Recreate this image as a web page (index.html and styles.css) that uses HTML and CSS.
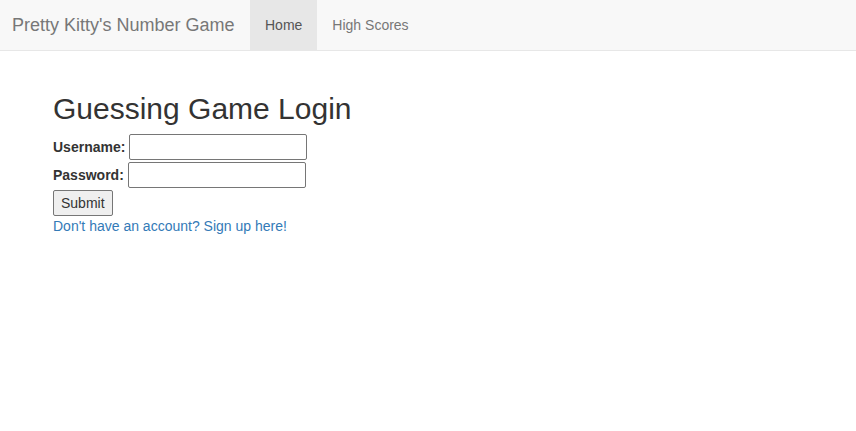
FILE: index.html
```html
<!DOCTYPE html>
<html>
<head>
<meta charset="utf-8">
<title>Pretty Kitty's Number Game</title>
<link rel="stylesheet" href="styles.css">
</head>
<body>
<nav class="navbar">
  <a class="brand" href="#">Pretty Kitty's Number Game</a>
  <ul class="nav">
    <li class="active"><a href="#">Home</a></li>
    <li><a href="#">High Scores</a></li>
  </ul>
</nav>
<main class="container">
  <h1>Guessing Game Login</h1>
  <form class="login">
    <div class="row"><label for="u">Username:</label> <input id="u" type="text"></div>
    <div class="row"><label for="p">Password:</label> <input id="p" type="password"></div>
    <div class="row"><button type="button">Submit</button></div>
  </form>
  <a class="signup" href="#">Don't have an account? Sign up here!</a>
</main>
</body>
</html>
```

FILE: styles.css
```css
* { box-sizing: border-box; }
html, body { margin: 0; }
body {
  font-family: "Liberation Sans", Arial, sans-serif;
  font-size: 14px;
  line-height: 1.42857;
  color: #333;
  background: #fff;
}
.navbar {
  display: flex;
  align-items: stretch;
  height: 51px;
  background: #f8f8f8;
  border-bottom: 1px solid #e7e7e7;
}
.brand {
  padding: 15px 15px 0 12px;
  font-size: 18px;
  line-height: 20px;
  color: #777;
  text-decoration: none;
  width: 250px;
}
.nav {
  display: flex;
  list-style: none;
  margin: 0;
  padding: 0;
}
.nav a {
  display: block;
  padding: 15px 15px;
  line-height: 20px;
  color: #777;
  text-decoration: none;
}
.nav .active a {
  background: #e7e7e7;
  color: #555;
}
.container {
  padding: 0 53px;
}
h1 {
  font-size: 30px;
  font-weight: 500;
  line-height: 33px;
  margin: 41px 0 0;
}
.login { margin: 8px 0 0; }
.row {
  display: flex;
  align-items: center;
  gap: 4px;
  height: 28px;
}
label {
  font-weight: bold;
  padding-top: 2px;
}
input {
  width: 178px;
  height: 26px;
  border: 1px solid #767676;
  border-radius: 2px;
  padding: 1px 2px;
  font-size: 13.33px;
  margin: 0;
}
button {
  height: 26px;
  padding: 1px 7px;
  font-family: "Liberation Sans", Arial, sans-serif;
  font-size: 14px;
  background: #efefef;
  border: 1px solid #767676;
  border-radius: 2px;
  color: #333;
  margin: 0;
}
.signup {
  display: block;
  color: #337ab7;
  text-decoration: none;
  line-height: 20px;
  margin-top: -1px;
}
```
